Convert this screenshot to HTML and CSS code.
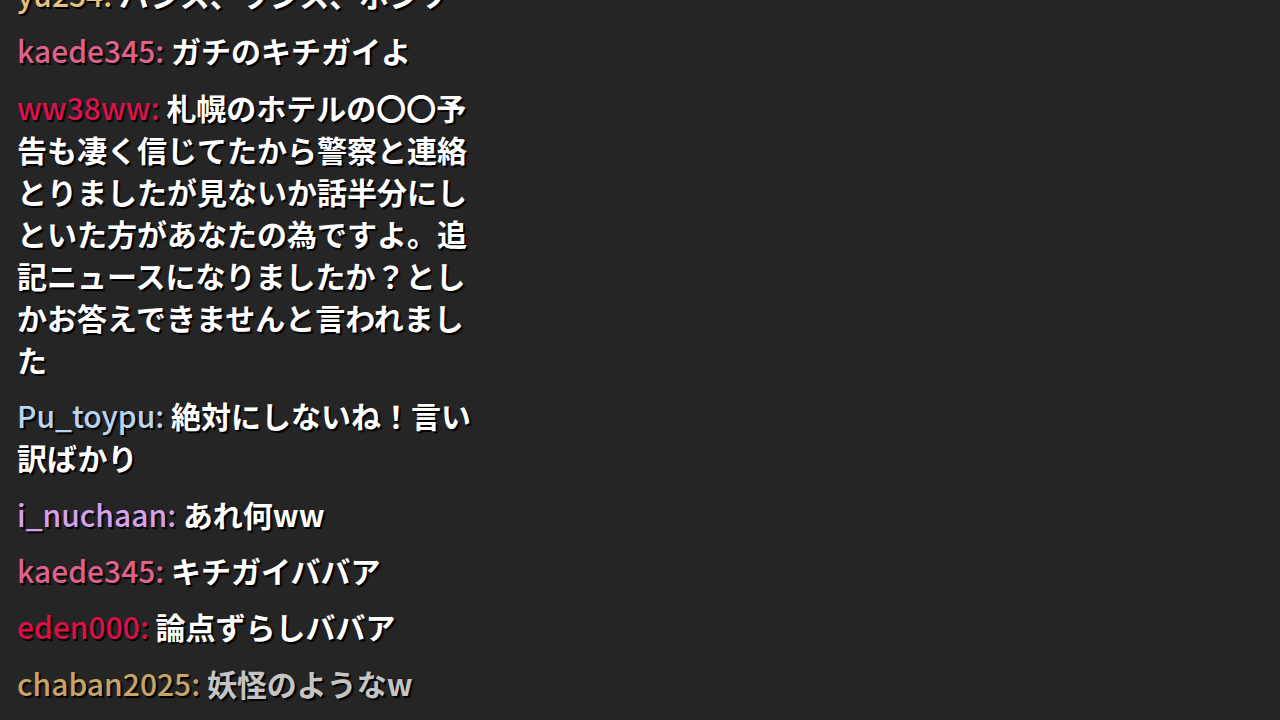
FILE: index.html
```html
<!DOCTYPE html>
<html lang="ja">
<head>
<meta charset="utf-8">
<link rel="stylesheet" href="styles.css">
</head>
<body>
<div class="chat">
  <div class="msg"><span class="name c-yu">yu254:</span> <span class="text">バンス、ワンス、ボンソ</span></div>
  <div class="msg"><span class="name c-kaede">kaede345:</span> <span class="text">ガチのキチガイよ</span></div>
  <div class="msg"><span class="name c-ww">ww38ww:</span> <span class="text">札幌のホテルの〇〇予告も凄く信じてたから警察と連絡とりましたが見ないか話半分にしといた方があなたの為ですよ。追記ニュースになりましたか？としかお答えできませんと言われました</span></div>
  <div class="msg"><span class="name c-pu">Pu_toypu:</span> <span class="text">絶対にしないね！言い訳ばかり</span></div>
  <div class="msg"><span class="name c-inu">i_nuchaan:</span> <span class="text">あれ何ww</span></div>
  <div class="msg"><span class="name c-kaede">kaede345:</span> <span class="text">キチガイババア</span></div>
  <div class="msg"><span class="name c-eden">eden000:</span> <span class="text">論点ずらしババア</span></div>
  <div class="msg fade"><span class="name c-chaban">chaban2025:</span> <span class="text">妖怪のようなw</span></div>
</div>
</body>
</html>
```
FILE: styles.css
```css
html, body {
  margin: 0;
  padding: 0;
  background: #252525;
  height: 100%;
  overflow: hidden;
}
body {
  font-family: "Noto Sans CJK JP", "Noto Sans", sans-serif;
  font-weight: 500;
  font-size: 30px;
  line-height: 42px;
  color: #ffffff;
}
.chat {
  width: 460px;
  padding: 0 0 0 17px;
  margin-top: -27px;
  display: flex;
  flex-direction: column;
  gap: 14.4px;
}
.msg {
  text-shadow: 2px 2px 1px #000;
  word-break: break-all;
  line-break: anywhere;
}
.name { font-weight: 500; }
.text { font-weight: 700; }
.c-yu { color: #e8c27a; }
.c-kaede { color: #e0608e; }
.c-ww { color: #dc1250; }
.c-pu { color: #b8d4f0; }
.c-inu { color: #d8a0f0; }
.c-eden { color: #dc1048; }
.c-chaban { color: #c8a468; }
.fade .text { color: #c4c4c4; }
```
